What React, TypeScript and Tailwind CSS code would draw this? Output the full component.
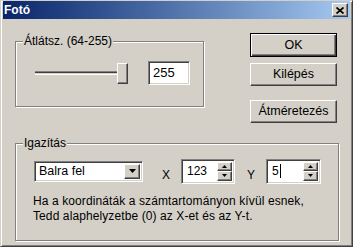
import React from "react";

const raised =
  "border border-t-white border-l-white border-r-[#404040] border-b-[#404040] shadow-[inset_-1px_-1px_0_#808080,inset_1px_1px_0_#d4d0c8]";
const sunken =
  "border border-t-[#808080] border-l-[#808080] border-r-white border-b-white shadow-[inset_1px_1px_0_#404040,inset_-1px_-1px_0_#d4d0c8]";

const Arrow = ({ up }: { up?: boolean }) => (
  <svg width="7" height="4" viewBox="0 0 7 4">
    {up ? <path d="M3.5 0 L7 4 L0 4 Z" fill="#000" /> : <path d="M0 0 L7 0 L3.5 4 Z" fill="#000" />}
  </svg>
);

const SmallArrow = ({ up }: { up?: boolean }) => (
  <svg width="5" height="3" viewBox="0 0 5 3">
    {up ? <path d="M2.5 0 L5 3 L0 3 Z" fill="#000" /> : <path d="M0 0 L5 0 L2.5 3 Z" fill="#000" />}
  </svg>
);

const Spin = ({ value, caret, w }: { value: string; caret?: boolean; w: string }) => (
  <div className={`${sunken} ${w} h-[25px] bg-white flex items-stretch p-[2px]`}>
    <div className="flex-1 flex items-center pl-[3px] text-[12px]">
      {value}
      {caret && <span className="inline-block w-[1px] h-[14px] bg-black ml-[1px]" />}
    </div>
    <div className="w-[15px] flex flex-col">
      <div className={`${raised} bg-[#d4d0c8] flex-1 flex items-center justify-center`}>
        <SmallArrow up />
      </div>
      <div className={`${raised} bg-[#d4d0c8] flex-1 flex items-center justify-center`}>
        <SmallArrow />
      </div>
    </div>
  </div>
);

const Group = ({ label, className, children }: { label: string; className: string; children: React.ReactNode }) => (
  <div className={`relative border border-[#808080] shadow-[inset_1px_1px_0_#fff,1px_1px_0_#fff] ${className}`}>
    <span className="absolute left-[7px] top-[-8px] px-[1px] bg-[#d4d0c8] text-[12px] leading-[14px]">{label}</span>
    {children}
  </div>
);

export default function App() {
  return (
    <div
      className="w-[353px] h-[247px] bg-[#d4d0c8] border border-[#d4d0c8] border-r-[#404040] border-b-[#404040] shadow-[inset_1px_1px_0_#fff,inset_-1px_-1px_0_#808080] px-[2px] text-black flex flex-col"
      style={{ fontFamily: '"Liberation Sans", Arial, sans-serif' }}
    >
      <div className="h-[18px] bg-gradient-to-r from-[#0a246a] to-[#a6caf0] flex items-center justify-between pl-[1px] pr-[2px]">
        <span className="text-white font-bold text-[12px]">Fotó</span>
        <div className={`${raised} bg-[#d4d0c8] w-[16px] h-[14px] flex items-center justify-center`}>
          <svg width="8" height="7" viewBox="0 0 8 7">
            <path d="M0.5 0.5 L7.5 6.5 M7.5 0.5 L0.5 6.5" stroke="#000" strokeWidth="1.7" />
          </svg>
        </div>
      </div>

      <div className="flex items-start">
        <Group label="Átlátsz. (64-255)" className="mt-[22px] ml-[12px] w-[189px] h-[66px]">
          <div className="flex items-start pl-[19px] pt-[19px]">
            <div className="flex items-center h-[24px]">
              <div className="w-[82px] h-[4px] bg-[#d4d0c8] border-t border-t-[#808080] border-b border-b-white shadow-[inset_0_1px_0_#404040]" />
              <div className={`${raised} bg-[#d4d0c8] w-[11px] h-[21px]`} />
            </div>
            <div className={`${sunken} ml-[20px] w-[42px] h-[24px] bg-white flex items-center pl-[4px] text-[13px]`}>255</div>
          </div>
        </Group>

        <div className="ml-[46px] mt-[14px] flex flex-col w-[87px] text-[12.5px]">
          <div className="h-[24px] border border-black bg-[#d4d0c8] shadow-[inset_1px_1px_0_#fff,inset_-1px_-1px_0_#404040,inset_-2px_-2px_0_#808080] flex items-center justify-center">
            OK
          </div>
          <div className={`${raised} mt-[6px] h-[23px] bg-[#d4d0c8] flex items-center justify-center`}>Kilépés</div>
          <div className={`${raised} mt-[14px] h-[23px] bg-[#d4d0c8] flex items-center justify-center`}>Átméretezés</div>
        </div>
      </div>

      <Group label="Igazítás" className="mt-[20px] ml-[12px] w-[324px] h-[98px]">
        <div className="flex items-center pl-[18px] pt-[14px] text-[12px]">
          <div className={`${sunken} w-[109px] h-[21px] bg-white flex items-stretch p-[2px]`}>
            <div className="flex-1 flex items-center pl-[2px] text-[12.5px]">Balra fel</div>
            <div className={`${raised} bg-[#d4d0c8] w-[16px] flex items-center justify-center`}>
              <Arrow />
            </div>
          </div>
          <span className="ml-[19px] mt-[8px] w-[19px]">X</span>
          <Spin value="123" w="w-[54px]" />
          <span className="ml-[12px] mt-[8px] w-[19px]">Y</span>
          <Spin value="5" caret w="w-[55px]" />
        </div>
        <div className="pl-[17px] mt-[10px] text-[12px] leading-[15px] tracking-[0.1px]">
          <div>Ha a koordináták a számtartományon kívül esnek,</div>
          <div>Tedd alaphelyzetbe (0) az X-et és az Y-t.</div>
        </div>
      </Group>
    </div>
  );
}
